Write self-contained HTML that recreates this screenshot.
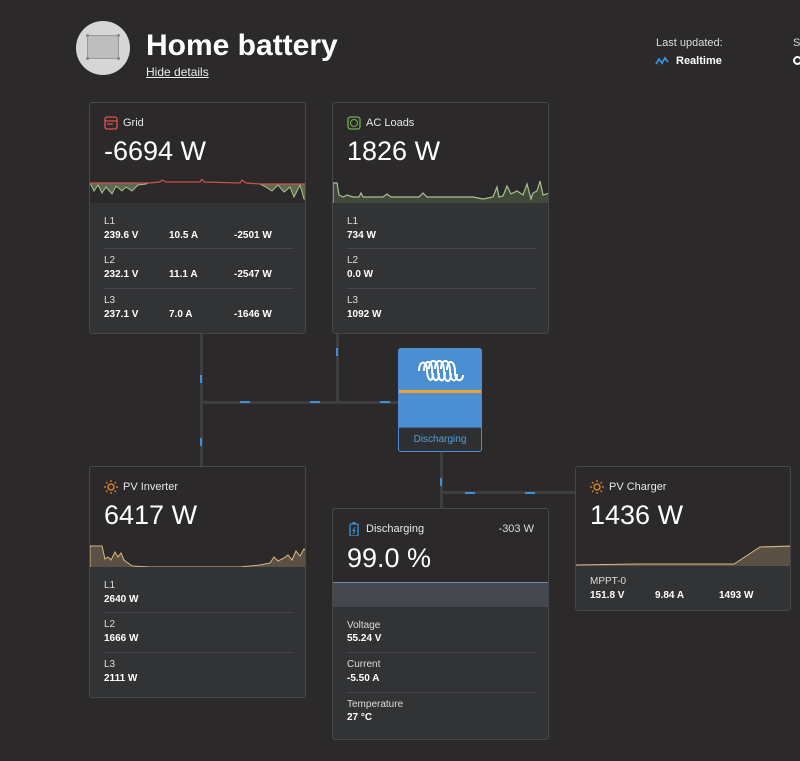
<!DOCTYPE html>
<html><head><meta charset="utf-8"><style>
*{box-sizing:border-box;margin:0;padding:0}
body{width:800px;height:761px;background:#2b292a;font-family:"Liberation Sans",sans-serif;color:#fff;position:relative;overflow:hidden}
.a{position:absolute}
.card{position:absolute;border:1px solid #48484a;border-radius:3px;background:#2b292a;overflow:hidden}
.bot{position:absolute;left:0;right:0;bottom:0;background:#323335}
.ttl{position:absolute;left:33px;top:14px;font-size:11px;color:#e8e8e8}
.big{position:absolute;left:14px;top:33px;font-size:27px;color:#fff}
.ic{position:absolute;left:14px;top:13px}
.lbl{position:absolute;font-size:10px;color:#ddd}
.val{position:absolute;font-size:10px;font-weight:bold;color:#fff}
.sep{position:absolute;left:14px;right:14px;height:1px;background:#4a4a4c}
.chart{position:absolute;left:0;top:76px}
.ln{position:absolute;background:#3e3e40}
.bl{position:absolute;background:#3d8fd6}
</style></head><body>

<!-- header -->
<div class="a" style="left:76px;top:21px;width:54px;height:54px;border-radius:50%;background:#d6d6d6"></div>
<div class="a" style="left:87px;top:35px;width:32px;height:24px;background:#bdbdbd;border:1px solid #9a9a9a"></div>
<div class="a" style="left:86px;top:34px;width:3px;height:3px;background:#888;border-radius:50%"></div>
<div class="a" style="left:117px;top:34px;width:3px;height:3px;background:#888;border-radius:50%"></div>
<div class="a" style="left:86px;top:57px;width:3px;height:3px;background:#888;border-radius:50%"></div>
<div class="a" style="left:117px;top:57px;width:3px;height:3px;background:#888;border-radius:50%"></div>
<div class="a" style="left:146px;top:29px;font-size:30px;font-weight:bold;color:#fff">Home battery</div>
<div class="a" style="left:146px;top:65px;font-size:12px;color:#eee;text-decoration:underline">Hide details</div>
<div class="a" style="left:656px;top:37px;font-size:11px;color:#ddd">Last updated:</div>
<svg class="a" style="left:655px;top:56px" width="14" height="10"><path d="M1 8 L4 3 L7 7 L10 2 L13 6" stroke="#3d8fd6" stroke-width="1.8" fill="none"/></svg>
<div class="a" style="left:676px;top:55px;font-size:11px;font-weight:bold;color:#fff">Realtime</div>
<div class="a" style="left:793px;top:37px;font-size:11px;color:#ddd">S</div>
<div class="a" style="left:793px;top:56px;width:9px;height:9px;border:2px solid #fff;border-radius:50%"></div>

<!-- connecting lines -->
<div class="ln" style="left:200px;top:334px;width:3px;height:132px"></div>
<div class="ln" style="left:200px;top:401px;width:198px;height:3px"></div>
<div class="ln" style="left:336px;top:334px;width:3px;height:69px"></div>
<div class="ln" style="left:440px;top:452px;width:3px;height:56px"></div>
<div class="ln" style="left:440px;top:491px;width:135px;height:3px"></div>
<div class="bl" style="left:200px;top:375px;width:2px;height:8px"></div>
<div class="bl" style="left:200px;top:438px;width:2px;height:8px"></div>
<div class="bl" style="left:336px;top:348px;width:2px;height:8px"></div>
<div class="bl" style="left:240px;top:401px;width:10px;height:2px"></div>
<div class="bl" style="left:310px;top:401px;width:10px;height:2px"></div>
<div class="bl" style="left:380px;top:401px;width:10px;height:2px"></div>
<div class="bl" style="left:440px;top:478px;width:2px;height:8px"></div>
<div class="bl" style="left:465px;top:492px;width:10px;height:2px"></div>
<div class="bl" style="left:525px;top:492px;width:10px;height:2px"></div>

<!-- inverter -->
<div class="a" style="left:398px;top:348px;width:84px;height:104px;border:1px solid #4a90d0;border-radius:3px;background:#4a8fd2;overflow:hidden">
 <svg class="a" style="left:18px;top:8px" width="48" height="30" viewBox="0 0 48 30">
  <g stroke="#fff" stroke-width="2" fill="none">
   <path d="M2 14 C2 3 10 3 10 13 C10 24 16 27 16 16"/>
   <path d="M7 14 C7 2 15 2 15 13 C15 25 22 27 22 16"/>
   <path d="M12 12 C12 1 21 1 21 13 C21 26 28 27 28 15"/>
   <path d="M18 12 C18 1 27 1 27 14 C27 27 34 27 34 16"/>
   <path d="M24 12 C24 1 33 1 33 14 C33 26 40 26 40 17"/>
   <path d="M30 13 C30 2 38 2 38 15 C38 26 46 25 46 18"/>
  </g>
 </svg>
 <div class="a" style="left:0;right:0;top:41px;height:3px;background:#f0a030"></div>
 <div class="a" style="left:0;right:0;top:78px;bottom:0;background:#2f3032;border-top:1px solid #3d6a98;font-size:10px;color:#4f9de0;text-align:center;line-height:24px">Discharging</div>
</div>

<!-- Grid -->
<div class="card" style="left:89px;top:102px;width:217px;height:232px">
 <svg class="ic" width="14" height="14"><rect x="1" y="1" width="12" height="12" rx="2" stroke="#e05050" stroke-width="1.3" fill="none"/><path d="M1 5 H13 M3 8 H9" stroke="#e05050" stroke-width="1.2"/></svg>
 <div class="ttl">Grid</div><div class="big">-6694 W</div>
 <svg class="chart" width="217" height="26" viewBox="0 0 217 26">
  <path d="M0 4 L4 12 L8 6 L12 14 L16 8 L22 15 L26 7 L32 12 L36 8 L42 12 L48 6 L56 5 L58 4 L0 4Z" fill="#5d6a50" stroke="#a8c090"/>
  <path d="M170 5 L176 8 L182 12 L188 6 L194 13 L200 8 L204 18 L210 6 L214 20 L217 20 L217 5Z" fill="#5d6a50" stroke="#a8c090"/>
  <path d="M0 4 L58 4 L70 3 L72 1 L76 3 L110 3 L112 0 L114 3 L150 4 L152 1 L156 4 L170 5 L217 5" stroke="#d05050" stroke-width="1.2" fill="none"/>
 </svg>
 <div class="bot" style="height:130px">
  <div class="lbl" style="left:14px;top:13px">L1</div>
  <div class="val" style="left:14px;top:27px">239.6 V</div><div class="val" style="left:79px;top:27px">10.5 A</div><div class="val" style="left:144px;top:27px">-2501 W</div>
  <div class="sep" style="top:45px;width:189px"></div>
  <div class="lbl" style="left:14px;top:52px">L2</div>
  <div class="val" style="left:14px;top:66px">232.1 V</div><div class="val" style="left:79px;top:66px">11.1 A</div><div class="val" style="left:144px;top:66px">-2547 W</div>
  <div class="sep" style="top:85px;width:189px"></div>
  <div class="lbl" style="left:14px;top:92px">L3</div>
  <div class="val" style="left:14px;top:106px">237.1 V</div><div class="val" style="left:79px;top:106px">7.0 A</div><div class="val" style="left:144px;top:106px">-1646 W</div>
 </div>
</div>

<!-- AC Loads -->
<div class="card" style="left:332px;top:102px;width:217px;height:232px">
 <svg class="ic" width="14" height="14"><rect x="1" y="1" width="12" height="12" rx="2.5" stroke="#6cb050" stroke-width="1.3" fill="none"/><circle cx="7" cy="7" r="3.5" stroke="#6cb050" fill="none"/></svg>
 <div class="ttl">AC Loads</div><div class="big">1826 W</div>
 <svg class="chart" width="217" height="26" viewBox="0 0 217 26">
  <path d="M0 4 L4 4 L6 16 L10 18 L14 16 L20 18 L26 18 L28 14 L30 18 L50 18 L54 15 L58 18 L86 18 L90 14 L94 18 L140 18 L150 20 L160 18 L164 8 L166 18 L170 17 L174 7 L178 15 L184 12 L190 16 L194 5 L198 20 L200 14 L204 12 L207 2 L210 16 L214 15 L217 13 L217 26 L0 26Z" fill="#414a3a" stroke="#a8c090" stroke-width="1.2"/>
 </svg>
 <div class="bot" style="height:130px">
  <div class="lbl" style="left:14px;top:13px">L1</div><div class="val" style="left:14px;top:27px">734 W</div>
  <div class="sep" style="top:45px;width:189px"></div>
  <div class="lbl" style="left:14px;top:52px">L2</div><div class="val" style="left:14px;top:66px">0.0 W</div>
  <div class="sep" style="top:85px;width:189px"></div>
  <div class="lbl" style="left:14px;top:92px">L3</div><div class="val" style="left:14px;top:106px">1092 W</div>
 </div>
</div>

<!-- PV Inverter -->
<div class="card" style="left:89px;top:466px;width:217px;height:232px">
 <svg class="ic" width="14" height="14"><circle cx="7" cy="7" r="3" stroke="#e88a30" stroke-width="1.3" fill="none"/><path d="M7 0V2M7 12V14M0 7H2M12 7H14M2 2L3.5 3.5M10.5 10.5L12 12M2 12L3.5 10.5M10.5 3.5L12 2" stroke="#e88a30" stroke-width="1.2"/></svg>
 <div class="ttl">PV Inverter</div><div class="big">6417 W</div>
 <svg class="chart" width="217" height="26" viewBox="0 0 217 26">
  <path d="M0 3 L12 3 L15 16 L18 14 L21 17 L25 9 L28 14 L31 10 L34 17 L38 20 L42 23 L60 24 L120 24 L150 24 L170 22 L180 20 L184 14 L188 18 L194 15 L198 12 L202 17 L206 8 L210 13 L214 6 L217 8 L217 26 L0 26Z" fill="#5a5043" stroke="#d8b880" stroke-width="1"/>
 </svg>
 <div class="bot" style="height:130px">
  <div class="lbl" style="left:14px;top:13px">L1</div><div class="val" style="left:14px;top:27px">2640 W</div>
  <div class="sep" style="top:45px;width:189px"></div>
  <div class="lbl" style="left:14px;top:52px">L2</div><div class="val" style="left:14px;top:66px">1666 W</div>
  <div class="sep" style="top:85px;width:189px"></div>
  <div class="lbl" style="left:14px;top:92px">L3</div><div class="val" style="left:14px;top:106px">2111 W</div>
 </div>
</div>

<!-- Battery -->
<div class="card" style="left:332px;top:508px;width:217px;height:232px">
 <svg class="ic" width="14" height="14" style="top:13px"><rect x="3" y="2" width="8" height="12" rx="1" stroke="#3d8fd6" stroke-width="1.3" fill="none"/><rect x="5.5" y="0" width="3" height="2" fill="#3d8fd6"/><path d="M8 5 L6 8.5 H8 L6 12" stroke="#3d8fd6" fill="none"/></svg>
 <div class="ttl">Discharging</div>
 <div class="a" style="right:14px;top:14px;font-size:11px;color:#ddd">-303 W</div>
 <div class="big" style="top:34px">99.0 %</div>
 <div class="a" style="left:0;right:0;top:73px;height:26px;background:#44484e;border-top:1px solid #6d8fb0"></div>
 <div class="bot" style="height:132px">
  <div class="lbl" style="left:14px;top:13px">Voltage</div><div class="val" style="left:14px;top:26px">55.24 V</div>
  <div class="sep" style="top:45px;width:189px"></div>
  <div class="lbl" style="left:14px;top:52px">Current</div><div class="val" style="left:14px;top:66px">-5.50 A</div>
  <div class="sep" style="top:85px;width:189px"></div>
  <div class="lbl" style="left:14px;top:92px">Temperature</div><div class="val" style="left:14px;top:105px">27 °C</div>
 </div>
</div>

<!-- PV Charger -->
<div class="card" style="left:575px;top:466px;width:216px;height:145px">
 <svg class="ic" width="14" height="14"><circle cx="7" cy="7" r="3" stroke="#e88a30" stroke-width="1.3" fill="none"/><path d="M7 0V2M7 12V14M0 7H2M12 7H14M2 2L3.5 3.5M10.5 10.5L12 12M2 12L3.5 10.5M10.5 3.5L12 2" stroke="#e88a30" stroke-width="1.2"/></svg>
 <div class="ttl">PV Charger</div><div class="big">1436 W</div>
 <svg class="chart" width="216" height="26" viewBox="0 0 216 26">
  <path d="M0 22 L60 21 L158 21 L184 4 L216 3 L216 26 L0 26Z" fill="#5a5043" stroke="#d8b880" stroke-width="1"/>
 </svg>
 <div class="bot" style="height:44px">
  <div class="lbl" style="left:14px;top:10px">MPPT-0</div>
  <div class="val" style="left:14px;top:24px">151.8 V</div><div class="val" style="left:79px;top:24px">9.84 A</div><div class="val" style="left:143px;top:24px">1493 W</div>
 </div>
</div>
</body></html>
